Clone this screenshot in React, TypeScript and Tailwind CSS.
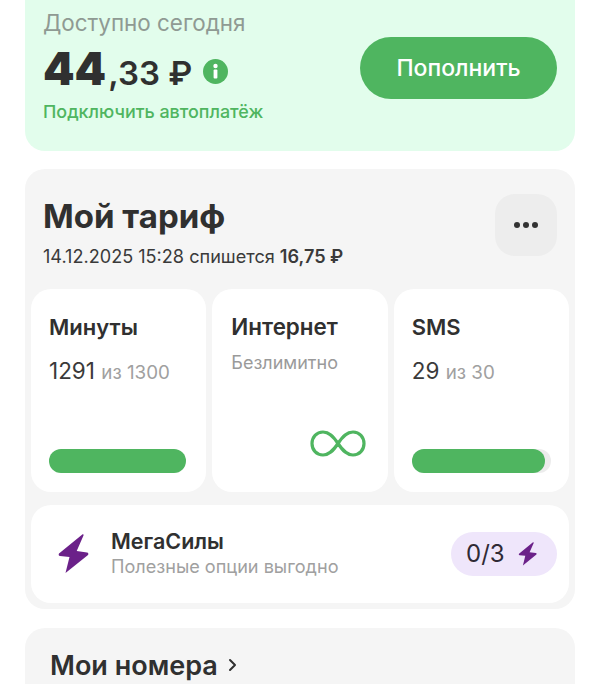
const boltPath = "M24.3 .5 1 19.500C.300 20.500.800 22 2 22l9.500 1L7.500 39 30 21c.800-1 .300-2.300-1-2.500l-10.300-1.500L25.500 1.500C25.800.500 25 0 24.300.500Z";

export default function App() {
  return (
    <div className="h-[684px] w-[600px] overflow-hidden bg-white px-[25px] text-[#303030]" style={{ fontFamily: "Inter, 'Noto Sans', sans-serif" }}>
      <section className="flex h-[151px] items-start justify-between rounded-b-[20px] bg-[#e2fdec] pl-[18px] pr-[18px]">
        <div className="flex flex-col">
          <div className="mt-[9px] text-[22.4px] leading-[28px] text-[#8f9a93]">Доступно сегодня</div>
          <div className="mt-[8px] flex h-[48px] items-baseline font-bold">
            <span className="text-[45px] leading-[48px] font-black">44</span>
            <span className="ml-[2px] text-[33px] leading-[48px] font-semibold">,33 ₽</span>
            <svg className="ml-[11px] mt-[5px] h-[25px] w-[25px] self-center" viewBox="0 0 25 25">
              <circle cx="12.5" cy="12.5" r="12.500" fill="#4fb560" />
              <circle cx="12.5" cy="7" r="2.200" fill="#fff" />
              <rect x="10.6" y="10.5" width="3.800" height="9" rx="1" fill="#fff" />
            </svg>
          </div>
          <div className="mt-[7px] text-[17.9px] leading-[24px] font-medium text-[#4fb560]">Подключить автоплатёж</div>
        </div>
        <button className="mt-[37px] h-[62px] w-[197px] rounded-full bg-[#4fb560] text-[23px] font-medium text-white">Пополнить</button>
      </section>

      <section className="mt-[18px] h-[440px] rounded-[20px] bg-[#f5f5f5] px-[6px] pb-[5px]">
        <div className="flex h-[120px] items-start justify-between pl-[12px] pr-[12px]">
          <div>
            <h1 className="mt-[26px] text-[33px] leading-[42px] font-bold">Мой тариф</h1>
            <p className="mt-[7px] text-[18.1px] leading-[24px] text-[#3a3a3a]">14.12.2025 15:28 спишется <b className="font-semibold">16,75 ₽</b></p>
          </div>
          <button className="mt-[25px] flex h-[62px] w-[62px] items-center justify-center gap-[3px] rounded-[20px] bg-[#ededed]">
            <span className="h-[6px] w-[6px] rounded-full bg-[#333]" />
            <span className="h-[6px] w-[6px] rounded-full bg-[#333]" />
            <span className="h-[6px] w-[6px] rounded-full bg-[#333]" />
          </button>
        </div>

        <div className="grid h-[203px] grid-cols-3 gap-[6px]">
          <div className="flex flex-col rounded-[20px] bg-white pl-[18px] pr-[20px] pb-[19px]">
            <div className="mt-[24px] text-[22px] leading-[28px] font-semibold">Минуты</div>
            <div className="mt-[15px] text-[22.5px] leading-[30px] text-[#3a3a3a]">1291 <span className="text-[18.8px] text-[#a0a0a0]">из 1300</span></div>
            <div className="mt-auto h-[24px] rounded-full bg-[#4fb560]" />
          </div>
          <div className="flex flex-col rounded-[20px] bg-white pl-[19px] pr-[19px] pb-[35px]">
            <div className="mt-[24px] text-[22.4px] leading-[28px] font-semibold">Интернет</div>
            <div className="mt-[9px] text-[18px] leading-[26px] text-[#9a9a9a]">Безлимитно</div>
            <svg className="mt-auto ml-auto mr-[3px] h-[27px] w-[56px]" viewBox="0 0 56 27" fill="none">
              <path d="M28 13.500C23 6 19 2 13 2C6.500 2 2 7 2 13.500C2 20 6.500 25 13 25C19 25 23 21 28 13.500C33 6 37 2 43 2C49.500 2 54 7 54 13.500C54 20 49.500 25 43 25C37 25 33 21 28 13.500Z" stroke="#4fb560" strokeWidth="3.200" />
            </svg>
          </div>
          <div className="flex flex-col rounded-[20px] bg-white pl-[18px] pr-[18px] pb-[19px]">
            <div className="mt-[24px] text-[22px] leading-[28px] font-semibold">SMS</div>
            <div className="mt-[15px] text-[22.5px] leading-[30px] text-[#3a3a3a]">29 <span className="text-[18.8px] text-[#a0a0a0]">из 30</span></div>
            <div className="mt-auto h-[24px] rounded-full bg-[#ececec]">
              <div className="h-full w-[96%] rounded-full bg-[#4fb560]" />
            </div>
          </div>
        </div>

        <div className="mt-[13px] flex h-[98px] items-center rounded-[20px] bg-white pl-[27px] pr-[12px]">
          <svg className="h-[40px] w-[32px]" viewBox="0 0 32 40">
            <path d={boltPath} fill="#6b2189" />
          </svg>
          <div className="ml-[21px] -mt-[2px]">
            <div className="text-[21.5px] leading-[26px] font-semibold">МегаСилы</div>
            <div className="text-[18.1px] leading-[24px] text-[#a0a0a0]">Полезные опции выгодно</div>
          </div>
          <div className="ml-auto flex h-[44px] w-[106px] items-center gap-[13px] rounded-full bg-[#efe6fb] pl-[15px] text-[24px] text-[#2f2a35]">
            0/3
            <svg className="h-[24px] w-[20px]" viewBox="0 0 32 40">
              <path d={boltPath} fill="#6b2189" />
            </svg>
          </div>
        </div>
      </section>

      <section className="mt-[19px] h-[80px] rounded-[20px] bg-[#f5f5f5] px-[25px] pt-[21px]">
        <div className="flex items-center gap-[10px]">
          <span className="text-[27px] leading-[34px] font-semibold">Мои номера</span>
          <svg className="mb-[3px] h-[14px] w-[10px]" viewBox="0 0 10 14" fill="none">
            <path d="M2 2l5 5-5 5" stroke="#303030" strokeWidth="2" strokeLinecap="round" strokeLinejoin="round" />
          </svg>
        </div>
      </section>
    </div>
  );
}
